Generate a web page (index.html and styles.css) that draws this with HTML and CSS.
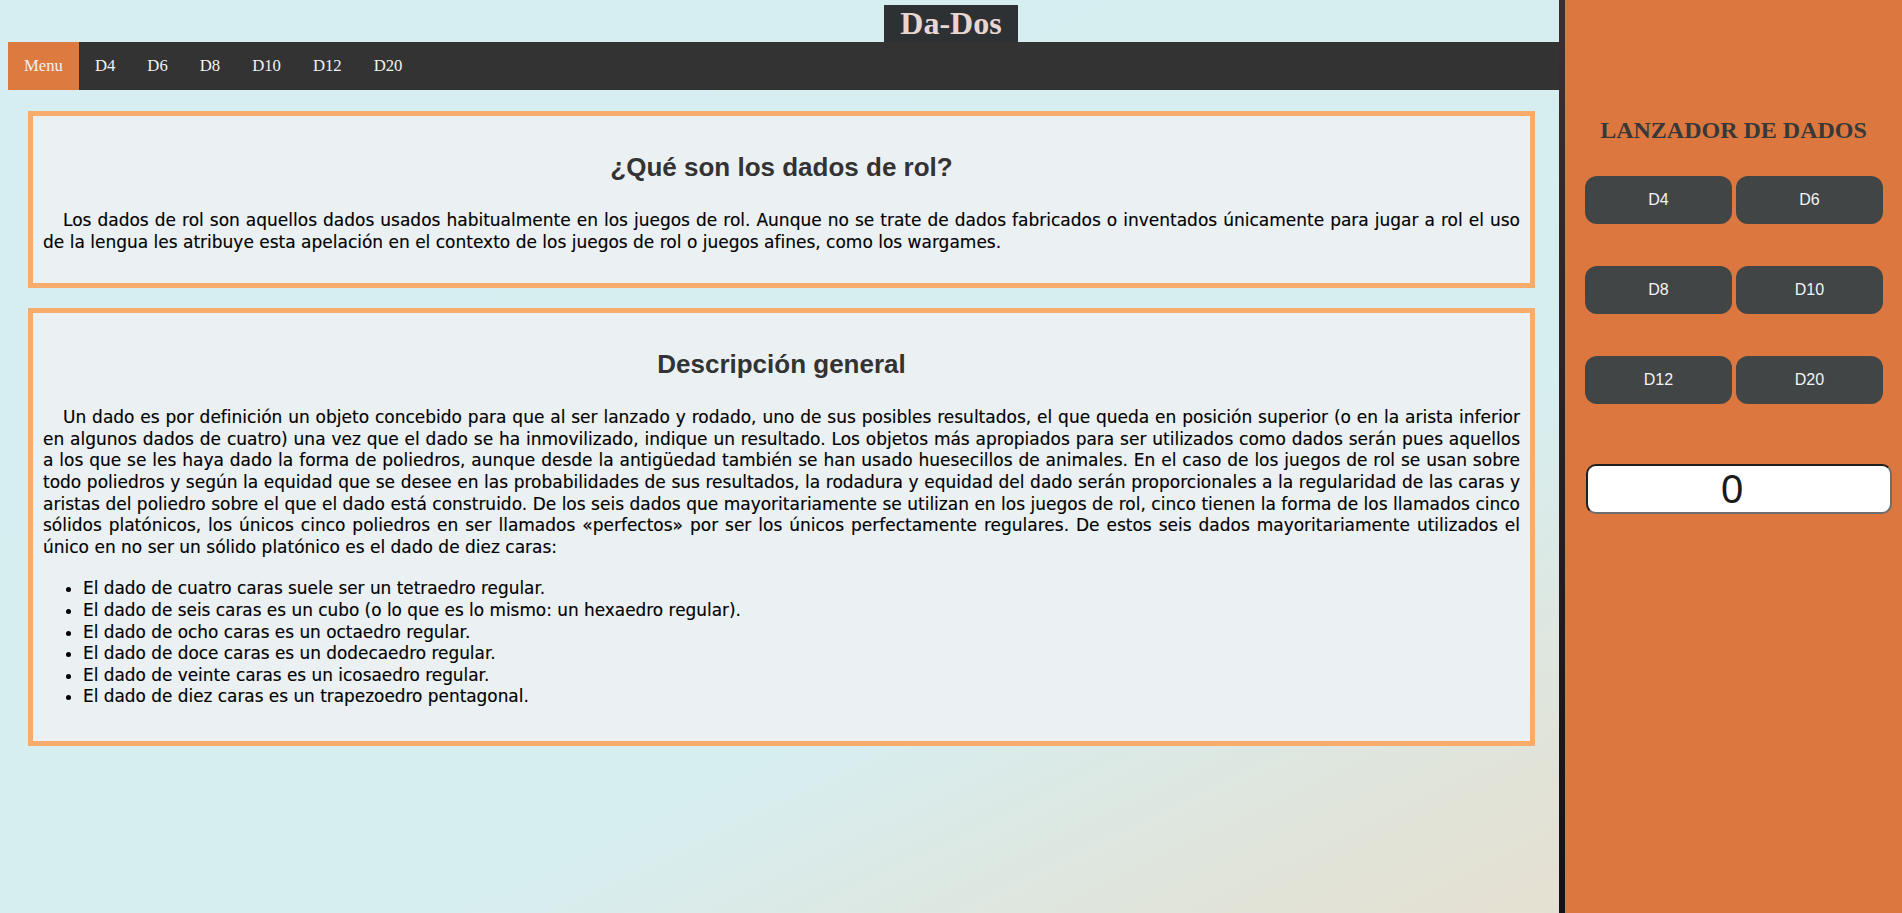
FILE: index.html
```html
<!DOCTYPE html>
<html lang="es">
<head>
<meta charset="utf-8">
<title>Da-Dos</title>
<link rel="stylesheet" href="styles.css">
</head>
<body>
<header class="top">
  <h1 class="brand">Da-Dos</h1>
</header>
<nav class="menu">
  <a class="menu-item active" href="#">Menu</a>
  <a class="menu-item" href="#">D4</a>
  <a class="menu-item" href="#">D6</a>
  <a class="menu-item" href="#">D8</a>
  <a class="menu-item" href="#">D10</a>
  <a class="menu-item" href="#">D12</a>
  <a class="menu-item" href="#">D20</a>
</nav>
<main class="content">
  <section class="card">
    <h2 class="card-title">¿Qué son los dados de rol?</h2>
    <p class="card-text">Los dados de rol son aquellos dados usados habitualmente en los juegos de rol. Aunque no se trate de dados fabricados o inventados únicamente para jugar a rol el uso de la lengua les atribuye esta apelación en el contexto de los juegos de rol o juegos afines, como los wargames.</p>
  </section>
  <section class="card">
    <h2 class="card-title">Descripción general</h2>
    <p class="card-text">Un dado es por definición un objeto concebido para que al ser lanzado y rodado, uno de sus posibles resultados, el que queda en posición superior (o en la arista inferior en algunos dados de cuatro) una vez que el dado se ha inmovilizado, indique un resultado. Los objetos más apropiados para ser utilizados como dados serán pues aquellos a los que se les haya dado la forma de poliedros, aunque desde la antigüedad también se han usado huesecillos de animales. En el caso de los juegos de rol se usan sobre todo poliedros y según la equidad que se desee en las probabilidades de sus resultados, la rodadura y equidad del dado serán proporcionales a la regularidad de las caras y aristas del poliedro sobre el que el dado está construido. De los seis dados que mayoritariamente se utilizan en los juegos de rol, cinco tienen la forma de los llamados cinco sólidos platónicos, los únicos cinco poliedros en ser llamados «perfectos» por ser los únicos perfectamente regulares. De estos seis dados mayoritariamente utilizados el único en no ser un sólido platónico es el dado de diez caras:</p>
    <ul class="card-list">
      <li>El dado de cuatro caras suele ser un tetraedro regular.</li>
      <li>El dado de seis caras es un cubo (o lo que es lo mismo: un hexaedro regular).</li>
      <li>El dado de ocho caras es un octaedro regular.</li>
      <li>El dado de doce caras es un dodecaedro regular.</li>
      <li>El dado de veinte caras es un icosaedro regular.</li>
      <li>El dado de diez caras es un trapezoedro pentagonal.</li>
    </ul>
  </section>
</main>
<aside class="sidebar">
  <h2 class="sidebar-title">LANZADOR DE DADOS</h2>
  <div class="dice-grid">
    <button class="die-btn">D4</button>
    <button class="die-btn">D6</button>
    <button class="die-btn">D8</button>
    <button class="die-btn">D10</button>
    <button class="die-btn">D12</button>
    <button class="die-btn">D20</button>
  </div>
  <div class="result">0</div>
</aside>
</body>
</html>
```
FILE: styles.css
```css
html {
  min-height: 100%;
  background: linear-gradient(to bottom right, #d6eef1 0%, #d7eef0 62%, #e1e3d8 82%, #e9ddcc 100%);
}
body {
  margin: 0;
  padding: 5px 8px 0 8px;
  font-family: "Liberation Serif", serif;
}
.top {
  text-align: center;
}
.brand {
  display: inline-block;
  margin: 0;
  padding: 0 16px;
  background: #2e3133;
  color: #e7d7d0;
  font-family: "Liberation Serif", serif;
  font-size: 32px;
  font-weight: bold;
  line-height: 37px;
}
.menu {
  display: flex;
  height: 48px;
  background: #333333;
}
.menu-item {
  padding: 0 16px;
  line-height: 48px;
  font-size: 16.7px;
  color: #f2f2f2;
  text-decoration: none;
}
.menu-item.active {
  background: #dc7a40;
}
.content {
  margin-right: 339px;
  padding: 21px 20px 20px 20px;
}
.card {
  background: #ebf0f3;
  border: 5px solid #f8ac6c;
  padding: 10px;
  margin-bottom: 20px;
}
.card-title {
  margin: 26px 0 28px;
  text-align: center;
  font-family: "Liberation Sans", Arial, sans-serif;
  font-size: 26px;
  line-height: 30px;
  font-weight: bold;
  color: #333333;
}
.card-text {
  margin: 0 0 20px;
  text-indent: 20px;
  text-align: justify;
  font-family: "DejaVu Sans", sans-serif;
  font-size: 17px;
  line-height: 21.6px;
  color: #000000;
  -webkit-text-stroke: 0.15px #000000;
}
.card-list {
  margin: 0 0 23px;
  padding-left: 40px;
  font-family: "DejaVu Sans", sans-serif;
  font-size: 16.9px;
  line-height: 21.6px;
  color: #000000;
  -webkit-text-stroke: 0.15px #000000;
}
.sidebar {
  position: fixed;
  top: 0;
  right: 0;
  bottom: 0;
  width: 337px;
  border-left: 6px solid #2a211d;
  border-image: linear-gradient(to bottom, #3f2f29, #15120f) 1;
  background: #dc783f;
  padding-top: 116px;
}
.sidebar-title {
  margin: 0 0 32px;
  text-align: center;
  font-family: "Liberation Serif", serif;
  font-size: 24px;
  line-height: 28px;
  font-weight: bold;
  color: #383838;
}
.dice-grid {
  display: grid;
  grid-template-columns: 147px 147px;
  grid-auto-rows: 48px;
  column-gap: 4px;
  row-gap: 42px;
  margin-left: 20px;
}
.die-btn {
  border: none;
  border-radius: 12px;
  background: #424546;
  color: #f4f4f4;
  font-family: "Liberation Sans", Arial, sans-serif;
  font-size: 16px;
  padding: 0;
}
.result {
  box-sizing: border-box;
  width: 306px;
  height: 50px;
  margin: 60px 0 0 21px;
  padding-right: 14px;
  background: #ffffff;
  border: 2px solid;
  border-color: #1f1f1f #6e6e6e #6e6e6e #1f1f1f;
  border-radius: 10px;
  text-align: center;
  font-family: "Liberation Sans", Arial, sans-serif;
  font-size: 40px;
  line-height: 46px;
  color: #1a1a1a;
}
```
